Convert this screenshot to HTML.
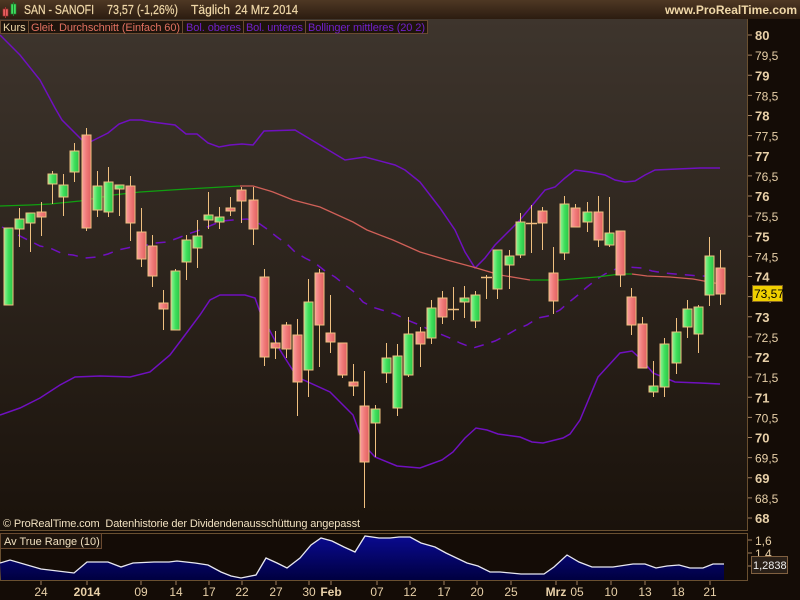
<!DOCTYPE html>
<html><head><meta charset="utf-8"><style>
html,body{margin:0;padding:0;background:#140c06;width:800px;height:600px;overflow:hidden}
svg{display:block}
text{font-family:"Liberation Sans",sans-serif;white-space:pre}
</style></head><body>
<svg id="s" width="800" height="600" xmlns="http://www.w3.org/2000/svg">
<defs>
<linearGradient id="hd" x1="0" y1="0" x2="0" y2="1"><stop offset="0" stop-color="#4e3824"/><stop offset="1" stop-color="#2c1c10"/></linearGradient>
<linearGradient id="bg" x1="0" y1="0" x2="0" y2="1"><stop offset="0" stop-color="#3e352d"/><stop offset="1" stop-color="#1a120b"/></linearGradient>
<linearGradient id="gc" x1="0" y1="0" x2="1" y2="0"><stop offset="0" stop-color="#9af09a"/><stop offset="0.5" stop-color="#3ee05a"/><stop offset="1" stop-color="#2cc048"/></linearGradient>
<linearGradient id="rc" x1="0" y1="0" x2="1" y2="0"><stop offset="0" stop-color="#f8a0a0"/><stop offset="0.5" stop-color="#f07a78"/><stop offset="1" stop-color="#e06060"/></linearGradient>
<linearGradient id="at" x1="0" y1="0" x2="0" y2="1"><stop offset="0" stop-color="#0a0a90"/><stop offset="1" stop-color="#000040"/></linearGradient>
</defs>
<rect x="0" y="0" width="800" height="600" fill="#140c06"/>
<rect x="0" y="0" width="800" height="19" fill="url(#hd)"/>
<rect x="0" y="19" width="747" height="511" fill="url(#bg)"/>
<line x1="747.5" y1="19" x2="747.5" y2="530" stroke="#6a5030"/>
<line x1="0" y1="530.5" x2="748" y2="530.5" stroke="#6a5030"/>
<rect x="0.5" y="533.5" width="747" height="47" fill="#140c06" stroke="#6a5030"/>
<g id="lines"></g>
<g id="cand"></g>
<rect x="3" y="9" width="5" height="7" fill="#e86060" stroke="#a03030" stroke-width="0.6"/>
<line x1="5.5" y1="7" x2="5.5" y2="18" stroke="#a03030"/>
<rect x="11" y="4" width="5" height="10" fill="#40e060" stroke="#208030" stroke-width="0.6"/>
<line x1="13.5" y1="2" x2="13.5" y2="16" stroke="#208030"/>
<g font-size="13" fill="#f0d8a8" stroke="#f0d8a8" stroke-width="0.2">
<text x="24" y="14" textLength="70" lengthAdjust="spacingAndGlyphs">SAN - SANOFI</text>
<text x="107" y="14" textLength="71" lengthAdjust="spacingAndGlyphs">73,57 (-1,26%)</text>
<text x="191" y="14" textLength="39" lengthAdjust="spacingAndGlyphs">Täglich</text>
<text x="235" y="14" textLength="63" lengthAdjust="spacingAndGlyphs">24 Mrz 2014</text>
</g>
<text x="797" y="14" font-size="12" font-weight="bold" fill="#f0d8a8" text-anchor="end">www.ProRealTime.com</text>
<rect x="0" y="20" width="428" height="14" fill="#1e140c"/>
<g stroke="#6a4a30" fill="none"><rect x="0.5" y="20.5" width="28" height="13"/><rect x="28.5" y="20.5" width="154" height="13"/><rect x="182.5" y="20.5" width="61" height="13"/><rect x="243.5" y="20.5" width="62" height="13"/><rect x="305.5" y="20.5" width="122" height="13"/></g>
<text x="3" y="31" font-size="11" fill="#f0d8a8">Kurs</text>
<text x="31" y="31" font-size="11" fill="#e07060" textLength="149">Gleit. Durchschnitt (Einfach 60)</text>
<text x="186" y="31" font-size="11" fill="#7020c8" textLength="55">Bol. oberes</text>
<text x="246" y="31" font-size="11" fill="#7020c8" textLength="57">Bol. unteres</text>
<text x="308" y="31" font-size="11" fill="#7020c8" textLength="117">Bollinger mittleres (20 2)</text>
<text x="3" y="527" font-size="11" fill="#f0e0c0" textLength="357">© ProRealTime.com  Datenhistorie der Dividendenausschüttung angepasst</text>
<rect x="0.5" y="533.5" width="101" height="15" fill="#1e140c" stroke="#6a4a30"/>
<text x="4" y="545" font-size="11" fill="#f0e0c0">Av True Range (10)</text>
<g id="axis"></g>
<rect x="752.5" y="285.5" width="30" height="16" fill="#f0d000" stroke="#806020"/>
<text x="754" y="298" font-size="12" fill="#000">73,57</text>
<rect x="751.5" y="556.5" width="36" height="17" fill="#2a2018" stroke="#806040"/>
<text x="753" y="569" font-size="11" fill="#f0f0f0">1,2838</text>
</svg>
<script>
var NS="http://www.w3.org/2000/svg";
function el(p,t,a,txt){var e=document.createElementNS(NS,t);for(var k in a)e.setAttribute(k,a[k]);if(txt!=null)e.textContent=txt;p.appendChild(e);return e;}
var C=[[8,228,305,228,305,1],[19,219,229,208,247,1],[30,213,223,213,252,1],[41,212,217,202,236,0],[52,174,184,171,204,1],[63,185,197,174,216,1],[74,151,172,143,182,1],[86,135,228,128,231,0],[97,186,210,171,217,1],[108,182,212,167,217,1],[119,185,189,185,216,1],[130,186,223,176,241,0],[141,232,259,208,267,0],[152,246,276,235,287,0],[163,303,309,290,330,0],[175,271,330,269,330,1],[186,240,262,235,280,1],[197,236,248,220,268,1],[208,215,220,192,229,1],[219,217,222,207,229,1],[230,208,211,197,216,0],[241,190,201,187,223,0],[253,200,229,187,245,0],[264,277,357,269,366,0],[275,343,348,331,359,0],[286,325,349,322,358,0],[297,335,382,319,416,0],[308,302,370,279,397,1],[319,273,325,269,367,0],[330,333,342,295,353,0],[342,343,375,343,378,0],[353,382,386,364,396,0],[364,406,462,371,508,0],[375,409,423,405,457,1],[386,358,373,343,383,1],[397,356,408,344,416,1],[408,334,375,317,377,1],[420,332,344,327,367,0],[431,308,338,300,344,1],[442,298,317,291,324,0],[453,309,309,287,320,2],[464,298,302,286,318,1],[475,295,321,291,328,1],[486,277,277,275,299,2],[497,250,289,250,299,1],[509,256,265,250,289,1],[520,222,255,213,258,1],[531,223,223,205,253,2],[542,211,223,207,250,0],[553,273,301,247,314,0],[564,204,253,196,260,1],[575,208,227,204,227,0],[587,212,222,202,232,1],[598,212,240,196,247,0],[609,233,245,197,247,1],[620,231,275,231,287,0],[631,297,325,288,335,0],[642,324,368,317,368,0],[653,386,392,361,397,1],[664,344,387,338,397,1],[676,332,363,318,374,1],[687,309,327,300,338,1],[698,307,334,305,353,1],[709,256,295,237,306,1],[720,268,294,250,305,0]];
var L=document.getElementById("lines"),G=document.getElementById("cand");
function pl(pts,col,w,dash){var a={points:pts,fill:"none",stroke:col,"stroke-width":w||1.5};if(dash)a["stroke-dasharray"]=dash;el(L,"polyline",a);}
pl("0,35 20,55 40,80 55,108 62,120 86,144 108,133 119,124 130,120 141,120 152,122 175,125 186,134 197,134 208,143 219,147 230,145 242,144 253,145 264,131 295,130 320,145 345,160 365,157 395,165 405,170 420,182 440,208 455,230 465,252 475,268 485,258 495,245 508,232 520,220 530,208 545,190 555,187 565,178 575,170 590,172 605,175 615,180 625,182 635,181 645,175 655,170 700,168 720,168","#7010c0");
pl("0,415 20,408 40,398 60,385 75,377 100,376 130,377 150,372 170,355 185,335 200,315 210,300 220,295 245,295 255,298 260,312 280,350 297,377 330,392 353,415 364,445 375,457 397,466 420,468 442,460 453,452 465,438 476,428 487,430 498,434 520,437 532,442 543,443 563,438 570,434 580,420 598,377 620,353 632,351 642,360 653,373 675,382 700,383 720,384","#7010c0");
pl("2,227 18,235 28,240 40,246 50,248 63,254 73,255 85,258 97,257 108,254 118,250 132,247 143,246 155,243 167,242 178,238 188,234 200,230 212,225 222,221 233,220 247,219 257,222 267,229 277,237 287,244 295,252 305,258 315,263 325,271 335,277 345,285 353,291 363,302 372,307 385,311 395,314 407,320 417,324 428,329 438,333 450,338 460,343 473,348 483,345 495,341 505,336 517,329 527,325 538,318 548,316 560,310 568,303 578,295 587,287 597,279 605,274 618,268 628,267 642,268 652,271 664,273 675,274 688,275 698,276 713,276 720,277","#7010c0",1.5,"10,8");
pl("0,206 30,205 50,204 80,201 113,195 140,192 187,189 240,186","#10a010",1.3);
pl("240,186 253,186 270,191 273,192 293,200 320,207 353,222 367,230 393,240 420,252 447,260 473,267 500,275 530,280","#d06058",1.3);
pl("530,280 560,280 597,277 620,274 632,274","#10a010",1.3);
pl("632,274 647,276 670,277 693,279 720,284","#d06058",1.3);
C.forEach(function(c){var x=c[0];el(G,"line",{x1:x+.5,y1:c[3],x2:x+.5,y2:c[4],stroke:"#f0c080","stroke-width":1});
 if(c[5]==2){el(G,"line",{x1:x-5,y1:c[1]+.5,x2:x+6,y2:c[1]+.5,stroke:"#f0c080","stroke-width":1.5});}
 else el(G,"rect",{x:x-4,y:c[1],width:9,height:Math.max(3,c[2]-c[1]),fill:c[5]?"url(#gc)":"url(#rc)",stroke:"#f0c080","stroke-width":1});});
var A="0,563 10,560 41,569 74,573 87,562 108,562 121,567 133,563 154,562 169,562 177,561 195,563 208,565 221,572 231,576 241,578 256,575 266,558 277,563 287,568 300,558 311,545 321,538 332,541 344,547 355,552 365,536 379,538 390,538 399,537 410,537 421,543 435,547 446,553 467,563 478,566 490,572 500,572 521,574 544,574 554,567 567,555 579,562 592,567 613,567 633,564 645,564 656,568 667,566 679,565 690,568 703,568 713,564 724,564";
el(L,"polygon",{points:"1,580 "+A+" 724,580",fill:"url(#at)"});
pl(A,"#e8e8f0",1.3);
var X=document.getElementById("axis");
for(var p=68;p<=80;p+=0.5){var y=35+(80-p)*40.25;var s=(p%1==0)?String(p):String(Math.floor(p))+",5";
 el(X,"line",{x1:748,y1:y,x2:752,y2:y,stroke:"#a08060"});
 el(X,"text",{x:755,y:y+5,"font-size":p%1==0?13:12,"font-weight":p%1==0?"bold":"normal",fill:"#e8d0a8"},s);}
[["1,6",540],["1,4",553],["1,2",566]].forEach(function(a){el(X,"line",{x1:748,y1:a[1],x2:752,y2:a[1],stroke:"#a08060"});el(X,"text",{x:755,y:a[1]+5,"font-size":12,fill:"#e8d0a8"},a[0]);});
[["24",41],["2014",87,1],["09",141],["14",176],["17",209],["22",242],["27",276],["30",309],["Feb",331,1],["07",377],["12",410],["17",444],["20",477],["25",511],["Mrz",556,1],["05",577],["10",611],["13",645],["18",678],["21",710]].forEach(function(d){
 el(X,"line",{x1:d[1],y1:581,x2:d[1],y2:585,stroke:"#a08060"});
 el(X,"text",{x:d[1],y:596,"font-size":12,"text-anchor":"middle","font-weight":d[2]?"bold":"normal",fill:"#e8d0a8"},d[0]);});
</script>
</body></html>
